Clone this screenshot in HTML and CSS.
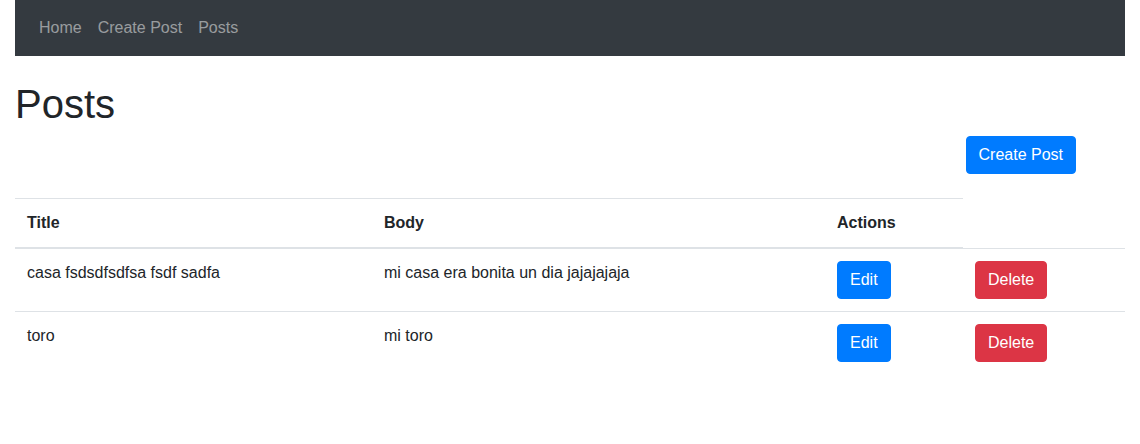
FILE: index.html
```html
<!DOCTYPE html>
<html lang="es">
<head>
<meta charset="utf-8">
<title>Posts</title>
<link rel="stylesheet" href="styles.css">
</head>
<body>
<div class="page">
  <nav class="navbar">
    <a class="nav-link" href="#">Home</a>
    <a class="nav-link" href="#">Create Post</a>
    <a class="nav-link" href="#">Posts</a>
  </nav>
  <h1 class="title">Posts</h1>
  <div class="toolbar">
    <a class="btn btn-primary" href="#">Create Post</a>
  </div>
  <table class="table">
    <colgroup>
      <col class="c1"><col class="c2"><col class="c3"><col class="c4">
    </colgroup>
    <thead>
      <tr><th>Title</th><th>Body</th><th>Actions</th></tr>
    </thead>
    <tbody>
      <tr>
        <td>casa fsdsdfsdfsa fsdf sadfa</td>
        <td>mi casa era bonita un dia jajajajaja</td>
        <td><a class="btn btn-primary" href="#">Edit</a></td>
        <td><button class="btn btn-danger" type="button">Delete</button></td>
      </tr>
      <tr>
        <td>toro</td>
        <td>mi toro</td>
        <td><a class="btn btn-primary" href="#">Edit</a></td>
        <td><button class="btn btn-danger" type="button">Delete</button></td>
      </tr>
    </tbody>
  </table>
</div>
</body>
</html>
```

FILE: styles.css
```css
* { box-sizing: border-box; }
html, body {
  margin: 0;
  background: #fff;
}
body {
  font-family: "Liberation Sans", Arial, sans-serif;
  font-size: 16px;
  line-height: 1.5;
  color: #212529;
}
.page {
  padding: 0 15px;
}
.navbar {
  display: flex;
  align-items: center;
  background: #343a40;
  padding: 8px 16px;
  height: 56px;
}
.nav-link {
  display: block;
  padding: 8px;
  color: rgba(255, 255, 255, 0.5);
  text-decoration: none;
  line-height: 24px;
}
.title {
  font-size: 40px;
  font-weight: 500;
  line-height: 1.2;
  margin: 24px 0 8px;
}
.toolbar {
  display: flex;
  justify-content: flex-end;
  padding-right: 49px;
  margin-bottom: 24px;
}
.btn {
  display: inline-block;
  font-family: inherit;
  font-size: 16px;
  line-height: 24px;
  padding: 6px 12px;
  border: 1px solid transparent;
  border-radius: 4px;
  color: #fff;
  text-decoration: none;
  cursor: pointer;
  vertical-align: middle;
}
.btn-primary {
  background: #007bff;
  border-color: #007bff;
}
.btn-danger {
  background: #dc3545;
  border-color: #dc3545;
}
.table {
  width: 100%;
  border-collapse: collapse;
  table-layout: fixed;
}
.c1 { width: 357px; }
.c2 { width: 453px; }
.c3 { width: 138px; }
.c4 { width: 162px; }
.table th,
.table td {
  padding: 12px;
  text-align: left;
  vertical-align: top;
  border-top: 1px solid #dee2e6;
}
.table th {
  font-weight: 700;
}
.table thead th {
  vertical-align: bottom;
  border-bottom: 2px solid #dee2e6;
}
```
